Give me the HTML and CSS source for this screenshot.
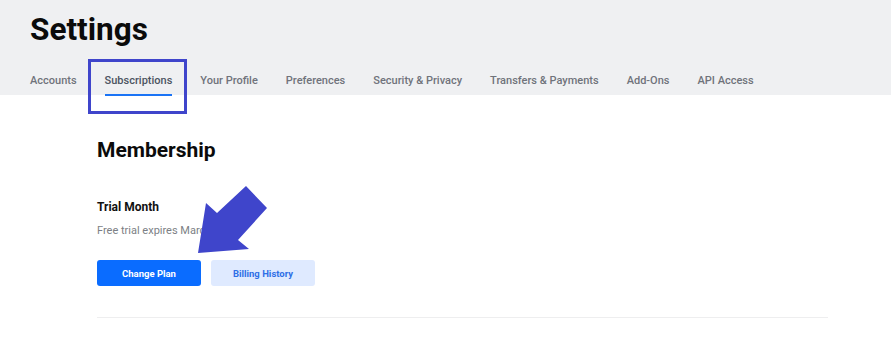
FILE: index.html
```html
<!DOCTYPE html>
<html>
<head>
<meta charset="utf-8">
<link rel="stylesheet" href="styles.css">
</head>
<body>
<header class="header">
  <h1 class="title">Settings</h1>
  <nav class="tabs">
    <a class="tab">Accounts</a>
    <a class="tab active">Subscriptions</a>
    <a class="tab">Your Profile</a>
    <a class="tab">Preferences</a>
    <a class="tab">Security &amp; Privacy</a>
    <a class="tab">Transfers &amp; Payments</a>
    <a class="tab">Add-Ons</a>
    <a class="tab">API Access</a>
  </nav>
  <div class="highlight"></div>
</header>
<main class="content">
  <h2 class="section-title">Membership</h2>
  <h3 class="plan-name">Trial Month</h3>
  <p class="plan-note">Free trial expires March</p>
  <div class="actions">
    <button class="btn btn-primary">Change Plan</button>
    <button class="btn btn-secondary">Billing History</button>
  </div>
  <hr class="divider">
  <svg class="arrow" width="891" height="339" viewBox="0 0 891 339">
    <polygon points="198,253 206,203 217,213 246,186 267,208 238,240 249,249" fill="#3f45cb"/>
  </svg>
</main>
</body>
</html>
```

FILE: styles.css
```css
* { box-sizing: border-box; }
html, body { margin: 0; padding: 0; }
body {
  font-family: Roboto, "Liberation Sans", Arial, sans-serif;
  background: #ffffff;
  color: #111;
  width: 891px;
  height: 339px;
  overflow: hidden;
  position: relative;
}
.header {
  background: #eff0f2;
  height: 95px;
  padding: 10px 0 0 30px;
  position: relative;
}
.title {
  margin: 0;
  font-size: 31.5px;
  font-weight: 700;
  line-height: 40px;
  color: #0b0b0b;
}
.tabs {
  display: flex;
  gap: 28px;
  margin-top: 24px;
}
.tab {
  font-size: 11px;
  font-weight: 500;
  color: #6f737b;
  line-height: 13px;
  padding-bottom: 7px;
  border-bottom: 2px solid transparent;
  white-space: nowrap;
}
.tab.active {
  color: #4c5461;
  border-bottom-color: #1a73f5;
}
.highlight {
  position: absolute;
  left: 88px;
  top: 59px;
  width: 99px;
  height: 55px;
  border: 3px solid #3f45cb;
}
.content {
  padding: 42px 0 0 97px;
  width: 828px;
}
.section-title {
  margin: 0;
  font-size: 21px;
  font-weight: 700;
  line-height: 26px;
  color: #0b0b0b;
}
.plan-name {
  margin: 36px 0 0;
  font-size: 12px;
  font-weight: 700;
  line-height: 16px;
  color: #111;
}
.plan-note {
  margin: 9px 0 0;
  font-size: 11px;
  line-height: 14px;
  color: #7c7f85;
}
.actions {
  display: flex;
  gap: 10px;
  margin-top: 22px;
}
.btn {
  height: 26px;
  width: 104px;
  border: none;
  border-radius: 3px;
  font-family: inherit;
  font-size: 9.5px;
  font-weight: 700;
  padding: 0;
}
.btn-primary {
  background: #0a6cff;
  color: #ffffff;
}
.btn-secondary {
  background: #dfeaff;
  color: #2f6fe6;
}
.divider {
  margin: 31px 0 0;
  border: none;
  border-top: 1px solid #eeeeef;
}
.arrow {
  position: absolute;
  left: 0;
  top: 0;
  pointer-events: none;
}
```
